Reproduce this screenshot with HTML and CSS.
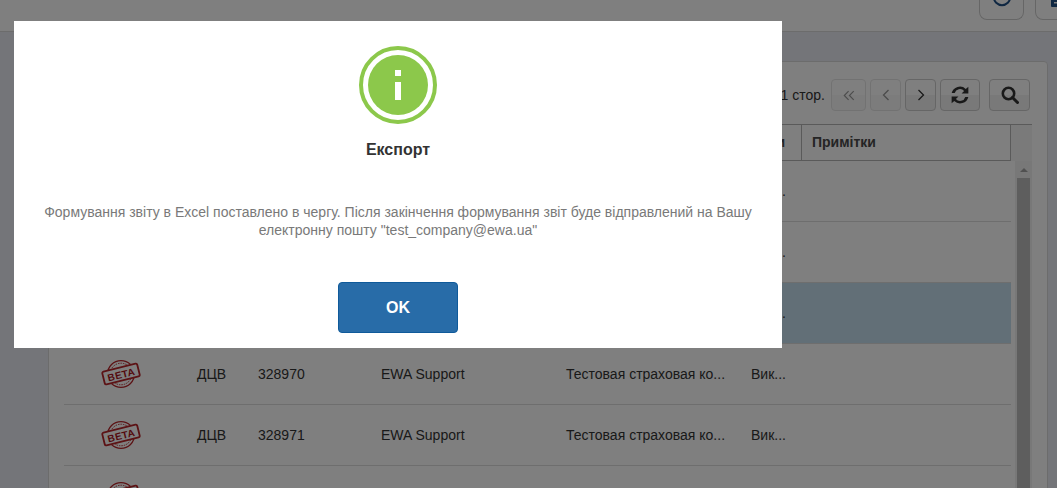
FILE: index.html
```html
<!DOCTYPE html>
<html lang="uk">
<head>
<meta charset="utf-8">
<title>Експорт</title>
<link rel="stylesheet" href="styles.css">
</head>
<body>
<svg class="defs" width="0" height="0" aria-hidden="true">
  <symbol id="beta" viewBox="0 0 40 30">
    <g fill="none" stroke="#b8262b">
      <circle cx="20" cy="15" r="13.4" stroke-width="1.3"/>
      <circle cx="20" cy="15" r="10.8" stroke-width="1" stroke-dasharray="1.5 1"/>
    </g>
    <g transform="rotate(-14 20 15)">
      <rect x="2" y="8.500" width="36" height="13" rx="1.500" fill="#fff" stroke="#b8262b" stroke-width="1.800"/>
      <text x="20" y="19.200" text-anchor="middle" class="beta-text">BETA</text>
    </g>
  </symbol>
</svg>

<header class="topbar">
  <button class="top-btn" type="button">
    <svg width="20" height="20" viewBox="0 0 20 20"><circle cx="10" cy="-3" r="8.200" fill="none" stroke="#1f4f85" stroke-width="2"/><path d="M10 -3v3" fill="none" stroke="#1f4f85" stroke-width="2"/></svg>
  </button>
  <button class="top-btn" type="button">
    <svg width="20" height="20" viewBox="0 0 20 20"><rect x="3" y="-2" width="14" height="9" rx="1" fill="#1f4f85"/><rect x="6" y="2" width="11" height="1.500" fill="#fff"/></svg>
  </button>
</header>

<main class="panel">
  <div class="toolbar">
    <span class="pages">з 1 стор.</span>
    <button class="tool-btn wide is-off" type="button"><svg width="12" height="11" viewBox="0 0 14 12"><path d="M6.500 1 1.500 6l5 5M12.500 1l-5 5 5 5" fill="none" stroke="currentColor" stroke-width="1.300"/></svg></button>
    <button class="tool-btn is-off" type="button"><svg width="8" height="12" viewBox="0 0 8 12"><path d="M6.500 1 1.500 6l5 5" fill="none" stroke="currentColor" stroke-width="1.300"/></svg></button>
    <button class="tool-btn" type="button"><svg width="8" height="12" viewBox="0 0 8 12"><path d="m1.500 1 5 5-5 5" fill="none" stroke="currentColor" stroke-width="1.300"/></svg></button>
    <button class="tool-btn big" type="button"><svg width="18" height="18" viewBox="1.500 1.500 14 14"><path d="M2 7a6.600 6.600 0 0 1 11-3.200L15 2v5.400H9.700l2-2A4.200 4.200 0 0 0 4.400 7ZM15 10a6.600 6.600 0 0 1-11 3.200L2 15V9.600h5.300l-2 2A4.200 4.200 0 0 0 12.600 10Z" fill="currentColor"/></svg></button>
    <button class="tool-btn search" type="button"><svg width="18" height="18" viewBox="0 0 18 18"><circle cx="7.500" cy="7.500" r="5.700" fill="none" stroke="currentColor" stroke-width="2.600"/><path d="m11.500 11.500 5 5" stroke="currentColor" stroke-width="3" stroke-linecap="round"/></svg></button>
  </div>

  <div class="grid">
    <div class="head-wrap">
      <div class="head">
        <div class="hcell c-status"></div>
        <div class="hcell c-type">Тип</div>
        <div class="hcell c-num">Номер</div>
        <div class="hcell c-user">Користувач</div>
        <div class="hcell c-comp">Страхова компанія</div>
        <div class="hcell c-exec">Стани</div>
        <div class="hcell c-note">Примітки</div>
      </div>
    </div>
    <div class="body-wrap">
      <div class="rows">
        <div class="row"><div class="c-status"><svg class="stamp"><use href="#beta"/></svg></div><div class="c-type">ДЦВ</div><div class="c-num">328967</div><div class="c-user">EWA Support</div><div class="c-comp">Тестовая страховая ко...</div><div class="c-exec">Вик...</div></div>
        <div class="row"><div class="c-status"><svg class="stamp"><use href="#beta"/></svg></div><div class="c-type">ДЦВ</div><div class="c-num">328968</div><div class="c-user">EWA Support</div><div class="c-comp">Тестовая страховая ко...</div><div class="c-exec">Вик...</div></div>
        <div class="row is-selected"><div class="c-status"><svg class="stamp"><use href="#beta"/></svg></div><div class="c-type">ДЦВ</div><div class="c-num">328969</div><div class="c-user">EWA Support</div><div class="c-comp">Тестовая страховая ко...</div><div class="c-exec">Вик...</div></div>
        <div class="row"><div class="c-status"><svg class="stamp"><use href="#beta"/></svg></div><div class="c-type">ДЦВ</div><div class="c-num">328970</div><div class="c-user">EWA Support</div><div class="c-comp">Тестовая страховая ко...</div><div class="c-exec">Вик...</div></div>
        <div class="row"><div class="c-status"><svg class="stamp"><use href="#beta"/></svg></div><div class="c-type">ДЦВ</div><div class="c-num">328971</div><div class="c-user">EWA Support</div><div class="c-comp">Тестовая страховая ко...</div><div class="c-exec">Вик...</div></div>
        <div class="row"><div class="c-status"><svg class="stamp"><use href="#beta"/></svg></div></div>
      </div>
      <div class="scrollbar"><span class="arrow"></span><span class="thumb"></span></div>
    </div>
  </div>
</main>

<div class="overlay">
  <section class="modal">
    <div class="icon-ring"><span class="icon-disc"><svg width="10" height="32" viewBox="0 0 10 32"><path d="M2 1h6v6h-6zM2 13h6v18h-6z" fill="#fff"/></svg></span></div>
    <h2 class="modal-title">Експорт</h2>
    <p class="modal-text">Формування звіту в Excel поставлено в чергу. Після закінчення формування звіт буде відправлений на Вашу електронну пошту "test_company@ewa.ua"</p>
    <button class="ok" type="button">OK</button>
  </section>
</div>
</body>
</html>
```
FILE: styles.css
```css
* { box-sizing: border-box; }
html, body { height: 100%; }
body {
  margin: 0;
  overflow: hidden;
  background: #e8ebf3;
  font-family: "Liberation Sans", Arial, sans-serif;
  font-size: 14px;
  color: #333;
}
.defs { position: absolute; }
.beta-text { font: bold 10px "Liberation Sans", Arial, sans-serif; fill: #a8141a; letter-spacing: .3px; }

.topbar {
  height: 32px;
  background: #fff;
  border-bottom: 1px solid #d8d8d8;
  display: flex;
  justify-content: flex-end;
  gap: 11px;
  overflow: hidden;
}
.top-btn {
  width: 45px;
  height: 20px;
  flex: none;
  padding: 0;
  background: #fff;
  border: 1px solid #ccc;
  border-top: 0;
  border-radius: 0 0 8px 8px;
  display: flex;
  justify-content: center;
  align-items: flex-start;
  overflow: hidden;
}
.top-btn:last-child { margin-right: -23px; }

.panel {
  margin: 29px 9px 0 48px;
  height: 500px;
  background: #fff;
  border: 1px solid #d9d9d9;
  border-radius: 4px;
  padding: 17px 15px 0;
}
.toolbar {
  display: flex;
  justify-content: flex-end;
  align-items: center;
  height: 32px;
  margin-bottom: 13px;
  padding-right: 2px;
  gap: 4px;
}
.pages { margin-right: 2px; }
.tool-btn {
  width: 31px;
  height: 32px;
  padding: 0;
  background: linear-gradient(#fff 0 50%, #f2f2f2 50%);
  border: 1px solid #ccc;
  border-radius: 4px;
  color: #333;
  display: flex;
  align-items: center;
  justify-content: center;
}
.tool-btn.wide { width: 35px; }
.tool-btn.big { width: 40px; }
.tool-btn.search { width: 41px; margin-left: 5px; }
.is-off { opacity: .5; }

.head-wrap {
  background: #f5f5f5;
  border-top: 1px solid #b5b5b5;
}
.head {
  display: flex;
  height: 36px;
  margin-right: 21px;
  background: #fff;
  border-right: 1px solid #b5b5b5;
  border-bottom: 1px solid #b5b5b5;
  font-weight: bold;
  color: #4a4a4a;
}
.hcell {
  display: flex;
  align-items: center;
  padding: 0 0 2px 10px;
  white-space: nowrap;
  overflow: hidden;
  border-right: 1px solid #b5b5b5;
}
.hcell.c-note { flex: 1; border-right: 0; }
.c-status { width: 123px; flex: none; display: flex; justify-content: center; padding-right: 10px; }
.c-type { width: 61px; flex: none; padding-left: 10px; }
.c-num { width: 123px; flex: none; padding-left: 10px; }
.c-user { width: 185px; flex: none; padding-left: 10px; }
.c-comp { width: 185px; flex: none; padding-left: 10px; white-space: nowrap; }
.c-exec { width: 61px; flex: none; padding-left: 10px; white-space: nowrap; }
.hcell.c-exec { justify-content: flex-end; padding: 0 16px 2px 0; }

.body-wrap { display: flex; height: 400px; }
.rows { flex: 1; margin-right: 4px; min-width: 0; }
.row {
  height: 61px;
  display: flex;
  align-items: center;
  border-bottom: 1px solid #dcdcdc;
}
.row.is-selected { background: #c4deef; }
.stamp { width: 40px; height: 30px; display: block; }

.scrollbar {
  width: 17px;
  flex: none;
  display: flex;
  flex-direction: column;
  align-items: center;
  background: #f1f1f1;
}
.arrow {
  margin: 7px 0 6px;
  border: 4px solid transparent;
  border-top: 0;
  border-bottom: 4px solid #a3a3a3;
}
.thumb { width: 13px; flex: 1; background: #bdbdbd; }

.overlay {
  position: fixed;
  inset: 0;
  background: rgba(0, 0, 0, .5);
}
.modal {
  width: 768px;
  height: 327px;
  margin: 21px 0 0 14px;
  background: #fff;
  padding-top: 25px;
  display: flex;
  flex-direction: column;
  align-items: center;
}
.icon-ring {
  width: 78px;
  height: 78px;
  border: 4px solid #8cc84b;
  border-radius: 50%;
  padding: 5px;
  flex: none;
}
.icon-disc {
  width: 100%;
  height: 100%;
  border-radius: 50%;
  background: #8cc84b;
  display: flex;
  align-items: center;
  justify-content: center;
}
.modal-title {
  margin: 17px 0 0;
  font-size: 16px;
  line-height: 18px;
  font-weight: bold;
  color: #333;
}
.modal-text {
  margin: 44px 0 0;
  width: 730px;
  text-align: center;
  font-size: 14px;
  line-height: 18px;
  color: #797979;
}
.ok {
  margin-top: 43px;
  width: 120px;
  height: 51px;
  flex: none;
  background: #286ca8;
  border: 1px solid #0f5a9a;
  border-radius: 4px;
  color: #fff;
  font: bold 16px "Liberation Sans", Arial, sans-serif;
}
```
